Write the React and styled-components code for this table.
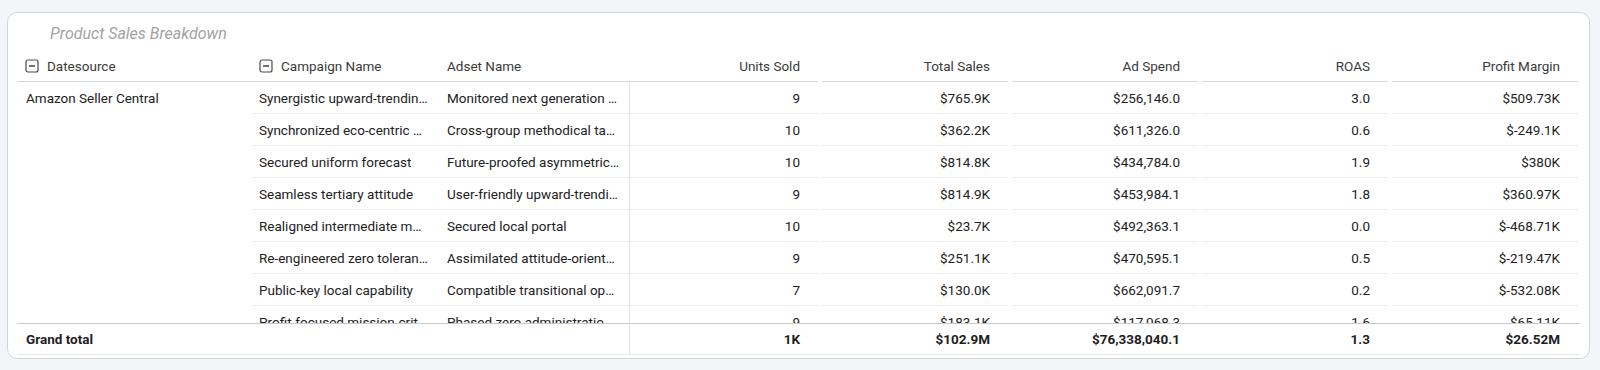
import React from 'react';
import styled, { createGlobalStyle } from 'styled-components';

const GlobalStyle = createGlobalStyle`
  html, body {
    margin: 0;
    padding: 0;
    background: #f4f5f9;
    font-family: Roboto, "Liberation Sans", Arial, sans-serif;
  }
`;

const Page = styled.div`
  padding: 12px 10px 0 7px;
`;

const Card = styled.section`
  background: #ffffff;
  border: 1px solid #d2d5dd;
  border-radius: 10px;
  padding: 11px 9px 3px 9px;
  display: flex;
  flex-direction: column;
`;

const Title = styled.h2`
  margin: 0 0 6px 33px;
  font-size: 16px;
  line-height: 20px;
  font-weight: 400;
  font-style: italic;
  color: #a3a3a3;
`;

const COLS = '234px 188px 191px repeat(5, 190px)';

const HeaderRow = styled.div`
  display: grid;
  grid-template-columns: ${COLS};
`;

const HeadCell = styled.div`
  position: relative;
  height: 32px;
  box-sizing: border-box;
  display: flex;
  align-items: center;
  justify-content: ${(p) => (p.$num ? 'flex-end' : 'flex-start')};
  gap: 8px;
  padding: ${(p) => (p.$num ? '0 20px 0 0' : '0 8px')};
  font-size: 13.5px;
  color: #3a3a3a;
  white-space: nowrap;
  &::after {
    content: '';
    position: absolute;
    bottom: 0;
    left: ${(p) => (p.$num && !p.$first ? '2px' : '0')};
    right: ${(p) => (p.$num ? '2px' : '0')};
    border-bottom: 1px solid #d9d9d9;
  }
`;

const CollapseIcon = styled.svg`
  flex: none;
  width: 14px;
  height: 14px;
`;

const Body = styled.div`
  height: 241px;
  overflow: hidden;
  display: flex;
`;

const SourceCell = styled.div`
  flex: none;
  width: 234px;
  box-sizing: border-box;
  padding: 0 9px;
  height: 31px;
  display: flex;
  align-items: center;
  font-size: 13.5px;
  color: #222;
`;

const Rows = styled.div`
  display: flex;
  flex-direction: column;
`;

const Row = styled.div`
  display: grid;
  grid-template-columns: 188px 191px repeat(5, 190px);
`;

const Cell = styled.div`
  position: relative;
  height: 32px;
  box-sizing: border-box;
  display: flex;
  align-items: center;
  justify-content: ${(p) => (p.$num ? 'flex-end' : 'flex-start')};
  padding: ${(p) => (p.$num ? '0 20px 0 0' : '0 10px 0 8px')};
  font-size: 13.5px;
  color: #222;
  min-width: 0;
  border-right: ${(p) => (p.$divider ? '1px solid #e2e2e2' : 'none')};
  &::after {
    content: '';
    position: absolute;
    bottom: 0;
    left: ${(p) => (p.$num && !p.$first ? '2px' : '0')};
    right: ${(p) => (p.$num ? '2px' : '0')};
    border-bottom: 1px solid #ececec;
  }
`;

const Clip = styled.span`
  display: block;
  overflow: hidden;
  white-space: nowrap;
  text-overflow: ellipsis;
`;

const FooterRow = styled.div`
  display: grid;
  grid-template-columns: ${COLS};
  border-top: 1px solid #c9c9c9;
  border-bottom: 1px solid #ebebeb;
`;

const FootCell = styled.div`
  height: 30px;
  box-sizing: border-box;
  display: flex;
  align-items: center;
  justify-content: ${(p) => (p.$num ? 'flex-end' : 'flex-start')};
  padding: ${(p) => (p.$num ? '0 20px 0 0' : '0 9px')};
  font-size: 13.5px;
  font-weight: 700;
  color: #1e1e1e;
  border-right: ${(p) => (p.$divider ? '1px solid #e2e2e2' : 'none')};
`;

const Minus = () => (
  <CollapseIcon viewBox="0 0 14 14">
    <rect x="1" y="1" width="12" height="12" rx="2" fill="none" stroke="#4a4a4a" strokeWidth="1.2" />
    <line x1="4" y1="7" x2="10" y2="7" stroke="#333" strokeWidth="1.4" />
  </CollapseIcon>
);

const metrics = ['Units Sold', 'Total Sales', 'Ad Spend', 'ROAS', 'Profit Margin'];

const rows = [
  ['Synergistic upward-trending interface', 'Monitored next generation initiative', '9', '$765.9K', '$256,146.0', '3.0', '$509.73K'],
  ['Synchronized eco-centric hierarchy', 'Cross-group methodical task-force', '10', '$362.2K', '$611,326.0', '0.6', '$-249.1K'],
  ['Secured uniform forecast', 'Future-proofed asymmetric projection', '10', '$814.8K', '$434,784.0', '1.9', '$380K'],
  ['Seamless tertiary attitude', 'User-friendly upward-trending hub', '9', '$814.9K', '$453,984.1', '1.8', '$360.97K'],
  ['Realigned intermediate moderator', 'Secured local portal', '10', '$23.7K', '$492,363.1', '0.0', '$-468.71K'],
  ['Re-engineered zero tolerance database', 'Assimilated attitude-oriented ability', '9', '$251.1K', '$470,595.1', '0.5', '$-219.47K'],
  ['Public-key local capability', 'Compatible transitional open system', '7', '$130.0K', '$662,091.7', '0.2', '$-532.08K'],
  ['Profit-focused mission-critical matrix', 'Phased zero administration archive', '9', '$183.1K', '$117,068.3', '1.6', '$65.11K'],
  ['Optional regional frame', 'Managed didactic workforce', '8', '$412.6K', '$301,220.4', '1.4', '$111.38K'],
];

const totals = ['1K', '$102.9M', '$76,338,040.1', '1.3', '$26.52M'];

export default function App() {
  return (
    <Page>
      <GlobalStyle />
      <Card>
        <Title>Product Sales Breakdown</Title>
        <HeaderRow>
          <HeadCell>
            <Minus />
            Datesource
          </HeadCell>
          <HeadCell>
            <Minus />
            Campaign Name
          </HeadCell>
          <HeadCell>Adset Name</HeadCell>
          {metrics.map((m, i) => (
            <HeadCell key={m} $num $first={i === 0}>
              {m}
            </HeadCell>
          ))}
        </HeaderRow>
        <Body>
          <SourceCell>Amazon Seller Central</SourceCell>
          <Rows>
            {rows.map((r) => (
              <Row key={r[0]}>
                <Cell>
                  <Clip>{r[0]}</Clip>
                </Cell>
                <Cell $divider>
                  <Clip>{r[1]}</Clip>
                </Cell>
                {r.slice(2).map((v, i) => (
                  <Cell key={i} $num $first={i === 0}>
                    {v}
                  </Cell>
                ))}
              </Row>
            ))}
          </Rows>
        </Body>
        <FooterRow>
          <FootCell>Grand total</FootCell>
          <FootCell />
          <FootCell $divider />
          {totals.map((t) => (
            <FootCell key={t} $num>
              {t}
            </FootCell>
          ))}
        </FooterRow>
      </Card>
    </Page>
  );
}
